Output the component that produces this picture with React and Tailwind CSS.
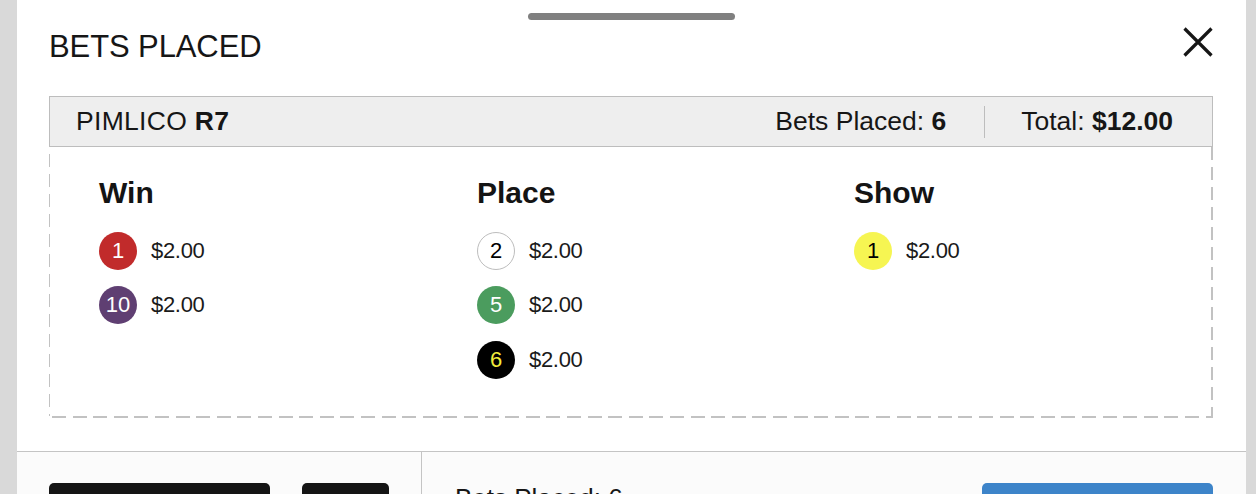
import React from "react";

const font = { fontFamily: '"Liberation Sans", Arial, Helvetica, sans-serif' };

function Badge({ n, cls }) {
  return (
    <div
      className={`w-[38px] h-[38px] rounded-full flex items-center justify-center text-[22px] leading-none shrink-0 ${cls}`}
    >
      {n}
    </div>
  );
}

function Row({ n, cls }) {
  return (
    <div className="flex items-center h-[38px] gap-[14px]">
      <Badge n={n} cls={cls} />
      <span className="text-[22px] leading-none text-[#1a1a1a] tracking-[-0.3px]">$2.00</span>
    </div>
  );
}

function Column({ title, rows }) {
  return (
    <div className="flex flex-col">
      <div className="text-[30px] leading-none font-bold text-[#141414]">{title}</div>
      <div className="flex flex-col gap-[16.5px] mt-[23.5px]">
        {rows.map((r, i) => (
          <Row key={i} n={r.n} cls={r.cls} />
        ))}
      </div>
    </div>
  );
}

const RED = "bg-[#c12b2b] text-white";
const PURPLE = "bg-[#5f3f72] text-white";
const WHITE = "bg-white text-black border border-[#bdbdbd]";
const GREEN = "bg-[#4b9c5e] text-white";
const BLACK = "bg-black text-[#f1ec3c]";
const YELLOW = "bg-[#f6f552] text-black";

export default function App() {
  return (
    <div style={font} className="flex h-[494px] overflow-hidden bg-[#d9d9d9] pl-[17px] pr-[10px]">
      <div className="flex-1 bg-white flex flex-col">
        {/* handle */}
        <div className="flex justify-center pt-[13px]">
          <div className="w-[207px] h-[7px] rounded-full bg-[#808080]" />
        </div>

        {/* title row */}
        <div className="flex items-start justify-between pl-[32px] pr-[33px] mt-[7px]">
          <div className="mt-[4px] text-[31px] leading-none text-[#161616] tracking-[-0.1px]">BETS PLACED</div>
          <svg width="30" height="30" viewBox="0 0 30 30" className="shrink-0">
            <path d="M1.5 1.5 L28.5 28.5 M28.5 1.5 L1.5 28.5" stroke="#161616" strokeWidth="3.2" strokeLinecap="butt" />
          </svg>
        </div>

        {/* card */}
        <div className="ml-[32px] mr-[33px] mt-[34px] flex flex-col">
          <div className="h-[51px] border border-[#bdbdbd] bg-[#eeeeee] flex items-center justify-between pl-[26px]">
            <div className="text-[26.5px] leading-none text-[#161616] tracking-[0.3px]">
              PIMLICO <span className="font-bold">R7</span>
            </div>
            <div className="flex items-center">
              <div className="text-[26.5px] leading-none text-[#161616] pr-[38px]">
                Bets Placed: <span className="font-bold">6</span>
              </div>
              <div className="w-px h-[32px] bg-[#bdbdbd]" />
              <div className="text-[26.5px] leading-none text-[#161616] pl-[36px] pr-[39px]">
                Total: <span className="font-bold">$12.00</span>
              </div>
            </div>
          </div>
          <div className="flex">
            <div className="w-px bg-[image:repeating-linear-gradient(to_bottom,transparent_0px,transparent_7px,#c2c2c2_7px,#c2c2c2_20px)]" />
            <div className="flex-1 grid grid-cols-[378px_377px_1fr] pl-[49px] pt-[31px] pb-[37px]">
              <Column title="Win" rows={[{ n: 1, cls: RED }, { n: 10, cls: PURPLE }]} />
              <Column
                title="Place"
                rows={[{ n: 2, cls: WHITE }, { n: 5, cls: GREEN }, { n: 6, cls: BLACK }]}
              />
              <Column title="Show" rows={[{ n: 1, cls: YELLOW }]} />
            </div>
            <div className="w-[2px] bg-[image:repeating-linear-gradient(to_bottom,#c2c2c2_0px,#c2c2c2_13px,transparent_13px,transparent_20px)]" />
          </div>
          <div className="h-[2px] bg-[image:repeating-linear-gradient(to_right,transparent_0px,transparent_3px,#c2c2c2_3px,#c2c2c2_17px,transparent_17px,transparent_20.6px)]" />
        </div>

        {/* footer */}
        <div className="mt-[33px] border-t border-[#c4c4c4] bg-[#fbfbfb] flex flex-1">
          <div className="w-[404px] flex gap-[32px] pl-[32px] pt-[31px]">
            <div className="w-[221px] h-[48px] rounded-[5px] bg-[#151515]" />
            <div className="w-[87px] h-[48px] rounded-[5px] bg-[#151515]" />
          </div>
          <div className="flex-1 border-l border-[#c4c4c4] flex pl-[33px] pr-[33px]">
            <div className="pt-[33px] text-[26px] leading-none text-[#161616] whitespace-nowrap">Bets Placed: 6</div>
            <div className="ml-auto mt-[31px] w-[231px] h-[48px] rounded-[5px] bg-[#3d84c9]" />
          </div>
        </div>
      </div>
    </div>
  );
}
